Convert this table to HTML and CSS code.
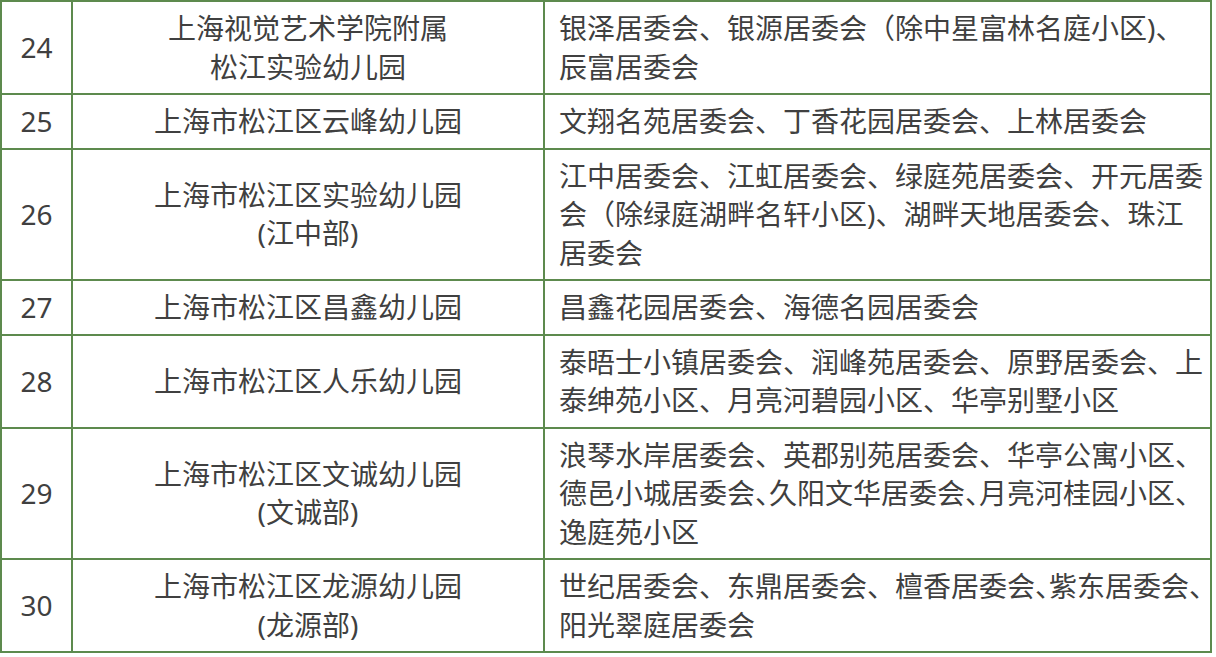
FILE: index.html
```html
<!DOCTYPE html>
<html lang="zh-CN">
<head>
<meta charset="utf-8">
<title>松江区幼儿园对口地段</title>
<link rel="stylesheet" href="styles.css">
</head>
<body>
<table class="zone-table">
  <colgroup>
    <col class="col-no">
    <col class="col-name">
    <col class="col-area">
  </colgroup>
  <tbody>
    <tr>
      <td class="no">24</td>
      <td class="name">上海视觉艺术学院附属<br>松江实验幼儿园</td>
      <td class="area">银泽居委会、银源居委会（除中星富林名庭小区)、<br>辰富居委会</td>
    </tr>
    <tr>
      <td class="no">25</td>
      <td class="name">上海市松江区云峰幼儿园</td>
      <td class="area">文翔名苑居委会、丁香花园居委会、上林居委会</td>
    </tr>
    <tr>
      <td class="no">26</td>
      <td class="name">上海市松江区实验幼儿园<br>(江中部)</td>
      <td class="area">江中居委会、江虹居委会、绿庭苑居委会、开元居委<br>会（除绿庭湖畔名轩小区)、湖畔天地居委会、珠江<br>居委会</td>
    </tr>
    <tr>
      <td class="no">27</td>
      <td class="name">上海市松江区昌鑫幼儿园</td>
      <td class="area">昌鑫花园居委会、海德名园居委会</td>
    </tr>
    <tr>
      <td class="no">28</td>
      <td class="name">上海市松江区人乐幼儿园</td>
      <td class="area">泰晤士小镇居委会、润峰苑居委会、原野居委会、上<br>泰绅苑小区、月亮河碧园小区、华亭别墅小区</td>
    </tr>
    <tr>
      <td class="no">29</td>
      <td class="name">上海市松江区文诚幼儿园<br>(文诚部)</td>
      <td class="area">浪琴水岸居委会、英郡别苑居委会、华亭公寓小区、<br>德邑小城居委会<span class="half">、</span>久阳文华居委会<span class="half">、</span>月亮河桂园小区、<br>逸庭苑小区</td>
    </tr>
    <tr>
      <td class="no">30</td>
      <td class="name">上海市松江区龙源幼儿园<br>(龙源部)</td>
      <td class="area">世纪居委会、东鼎居委会、檀香居委会<span class="half">、</span>紫东居委会<span class="half">、</span><br>阳光翠庭居委会</td>
    </tr>
  </tbody>
</table>
</body>
</html>
```

FILE: styles.css
```css
html, body {
  margin: 0;
  padding: 0;
  background: #ffffff;
}

body {
  font-family: "Noto Sans", "Noto Sans CJK SC", sans-serif;
  font-size: 28px;
  color: #404040;
}

.zone-table {
  border-collapse: collapse;
  table-layout: fixed;
  width: 1210px;
  margin: 0;
}

.col-no { width: 71px; }
.col-name { width: 472px; }
.col-area { width: 667px; }

.zone-table td {
  border: 2px solid #5d8a4e;
  line-height: 38.5px;
  padding: 7px 0;
  vertical-align: middle;
  white-space: nowrap;
  overflow: hidden;
}

.zone-table td.no {
  text-align: center;
}

.zone-table td.name {
  text-align: center;
}

.zone-table td.area {
  text-align: left;
  padding-left: 14px;
  padding-right: 2px;
}

.half {
  letter-spacing: -0.5em;
}
```
